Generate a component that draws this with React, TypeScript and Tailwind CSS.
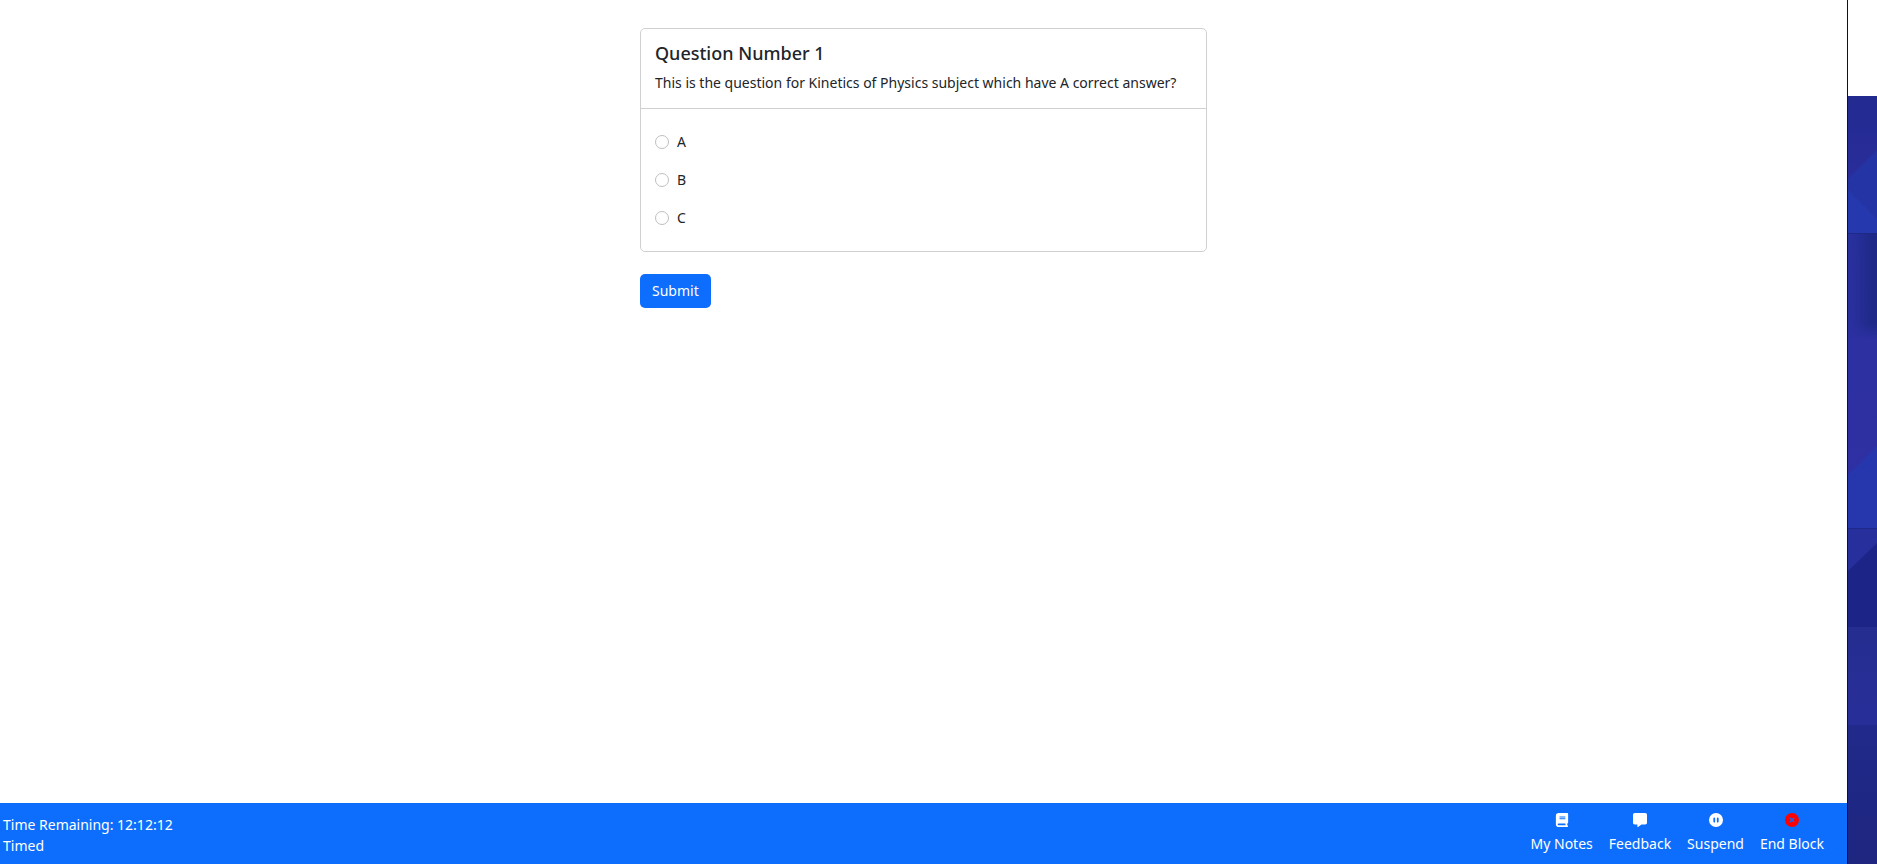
import type { ReactNode } from "react";
import { FaBook, FaCirclePause, FaCircleXmark, FaMessage } from "react-icons/fa6";

const choices = ["A", "B", "C"];

function ToolButton({ icon, label }: { icon: ReactNode; label: string }) {
  return (
    <button type="button" className="flex flex-col items-center gap-1">
      {icon}
      <span>{label}</span>
    </button>
  );
}

function Backdrop() {
  return (
    <svg
      aria-hidden="true"
      className="h-full w-full"
      viewBox="0 0 29 768"
      preserveAspectRatio="none"
    >
      <defs>
        <linearGradient id="top" x1="0" y1="0" x2="0" y2="1">
          <stop offset="0" stopColor="#222a90" />
          <stop offset="0.6" stopColor="#2a2d9a" />
          <stop offset="1" stopColor="#2a2f9c" />
        </linearGradient>
        <linearGradient id="shade" x1="0" y1="0" x2="1" y2="0">
          <stop offset="0" stopColor="#1f2a88" stopOpacity="0" />
          <stop offset="0.3" stopColor="#1f2a88" stopOpacity="0.3" />
          <stop offset="0.8" stopColor="#1f2a88" stopOpacity="1" />
        </linearGradient>
        <linearGradient id="fade" x1="0" y1="0" x2="0" y2="1">
          <stop offset="0" stopColor="#ffffff" />
          <stop offset="0.85" stopColor="#ffffff" />
          <stop offset="1" stopColor="#000000" />
        </linearGradient>
        <mask id="shadeMask">
          <rect y="137" width="29" height="106" fill="url(#fade)" />
        </mask>
        <linearGradient id="mid" x1="0" y1="0" x2="0" y2="1">
          <stop offset="0" stopColor="#2a31a0" />
          <stop offset="1" stopColor="#302fa3" />
        </linearGradient>
        <linearGradient id="low" x1="0" y1="0" x2="0" y2="1">
          <stop offset="0" stopColor="#252d90" />
          <stop offset="1" stopColor="#282e98" />
        </linearGradient>
        <linearGradient id="base" x1="0" y1="0" x2="0" y2="1">
          <stop offset="0" stopColor="#21298a" />
          <stop offset="1" stopColor="#1e2680" />
        </linearGradient>
      </defs>
      <rect width="29" height="137" fill="url(#top)" />
      <path d="M0 83L29 54V137H0Z" fill="#2434a4" />
      <path d="M0 94L29 123V137H0Z" fill="#2638ae" />
      <rect y="137" width="29" height="295" fill="url(#mid)" />
      <rect y="137" width="29" height="106" fill="url(#shade)" mask="url(#shadeMask)" />
      <path d="M0 379L29 350V432H0Z" fill="#2636ac" />
      <rect y="432" width="29" height="99" fill="#272f9c" />
      <path d="M0 475L29 447V531H0Z" fill="#1c2587" />
      <rect y="531" width="29" height="98" fill="url(#low)" />
      <rect y="629" width="29" height="139" fill="url(#base)" />
      <path d="M0 137.500H29M0 432.500H29M0 530.500H29" stroke="#1d2680" strokeOpacity="0.7" />
    </svg>
  );
}

export default function App() {
  return (
    <div className="flex min-h-screen bg-white font-['Noto_Sans',sans-serif] text-sm text-[#212529]">
      <div className="flex flex-1 flex-col">
        <main className="flex flex-1 justify-center pt-7">
          <form className="w-full max-w-[567px]">
            <fieldset className="rounded-[5px] border border-[#cfd0d1]">
              <div className="border-b border-[#cfd0d1] px-3.5 pt-[13px] pb-[15px]">
                <h1 className="mb-2 text-lg leading-[22px] font-medium">Question Number 1</h1>
                <p className="leading-[21px]">
                  This is the question for Kinetics of Physics subject which have A correct answer?
                </p>
              </div>
              <div className="flex flex-col gap-4 px-3.5 py-[22px]">
                {choices.map((choice) => (
                  <label key={choice} className="flex items-center gap-2 leading-[22px]">
                    <input
                      type="radio"
                      name="answer"
                      value={choice}
                      className="size-3.5 appearance-none rounded-full border border-[#bfbfbf] bg-white checked:border-4 checked:border-[#0d6efd]"
                    />
                    {choice}
                  </label>
                ))}
              </div>
            </fieldset>
            <button
              type="button"
              className="mt-[22px] rounded-[5px] bg-[#0d6efd] px-3 py-1.5 leading-[22px] text-white"
            >
              Submit
            </button>
          </form>
        </main>
        <footer className="flex items-center justify-between bg-[#0d6efd] pt-2.5 pr-[23px] pb-2 pl-[3px] text-white">
          <div className="leading-[21px]">
            <p>Time Remaining: 12:12:12</p>
            <p>Timed</p>
          </div>
          <nav aria-label="Test tools" className="flex gap-4 leading-[25px]">
            <ToolButton icon={<FaBook />} label="My Notes" />
            <ToolButton icon={<FaMessage />} label="Feedback" />
            <ToolButton icon={<FaCirclePause />} label="Suspend" />
            <ToolButton icon={<FaCircleXmark className="text-[#ff0000]" />} label="End Block" />
          </nav>
        </footer>
      </div>
      <aside className="flex w-[30px] flex-col border-l border-[#10131f]">
        <div className="h-24 bg-white" />
        <div className="min-h-0 flex-1">
          <Backdrop />
        </div>
      </aside>
    </div>
  );
}
